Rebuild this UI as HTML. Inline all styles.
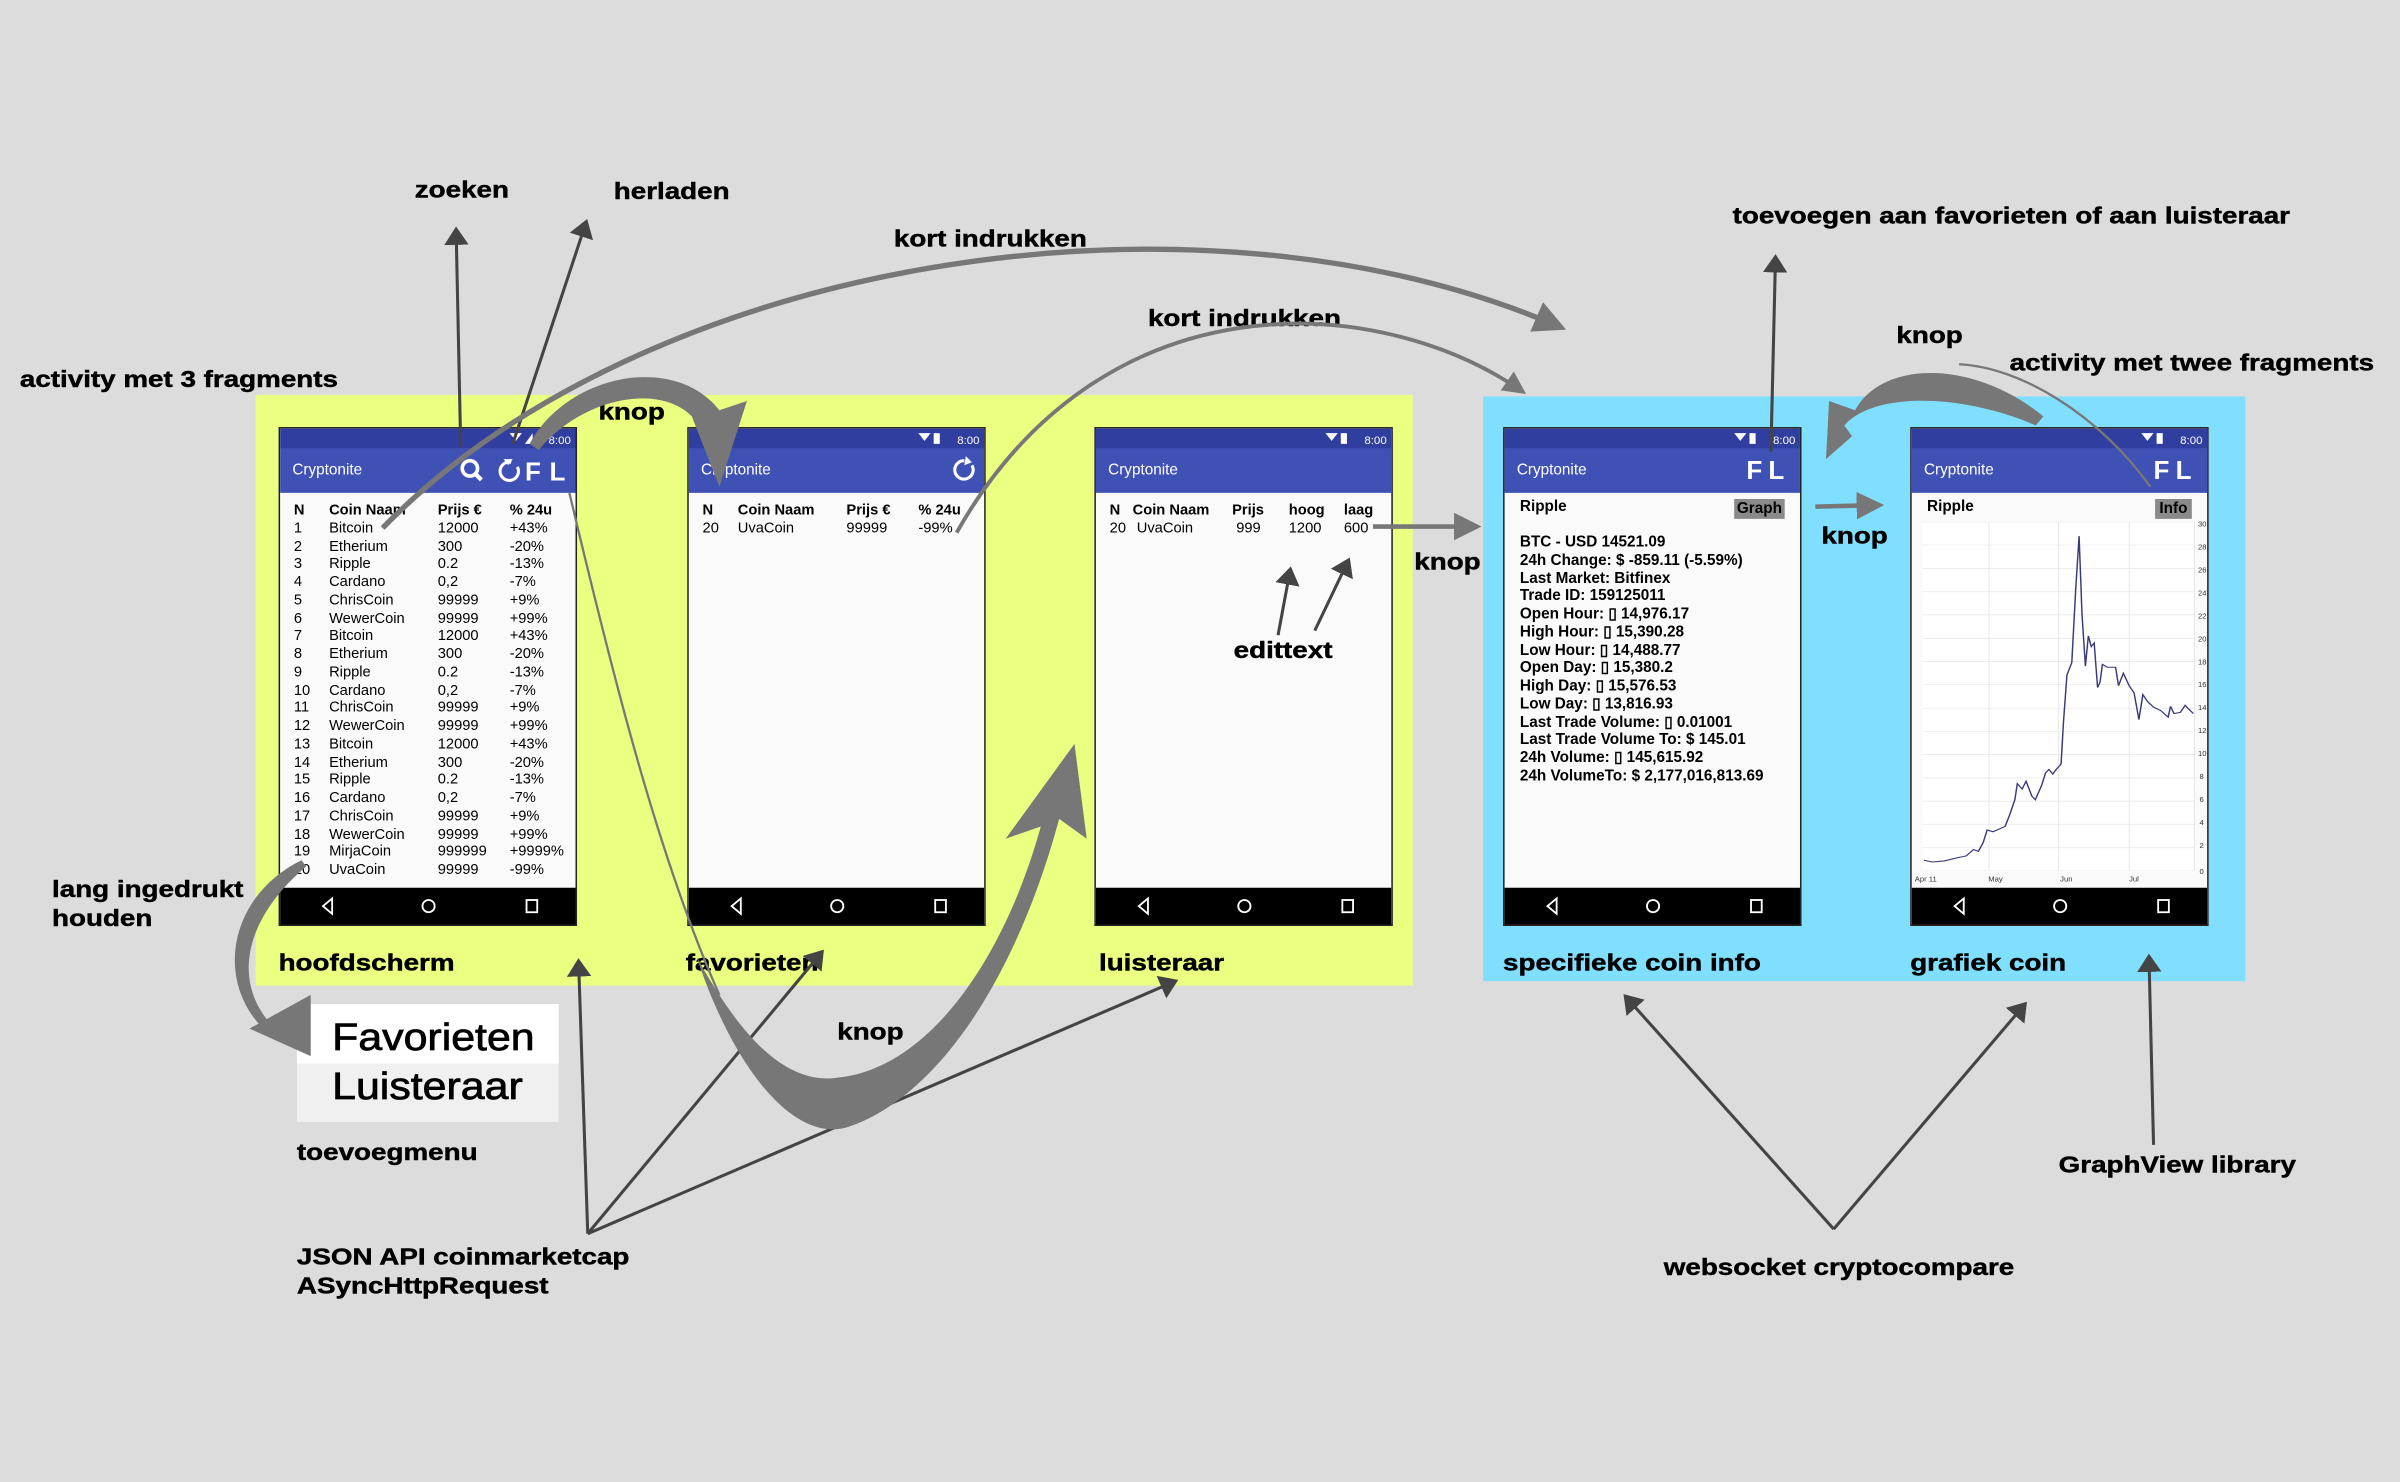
<!DOCTYPE html>
<html><head><meta charset="utf-8"><style>
html,body{margin:0;padding:0;background:#dcdcdc;width:2400px;height:1482px;overflow:hidden}
#w{position:absolute;left:0;top:0;width:1568px;height:968px;transform:scale(1.5306);transform-origin:0 0;font-family:"Liberation Sans",sans-serif}
.a{position:absolute}
.ph{position:absolute;top:279px;width:195px;height:326px;border:1px solid #222;box-sizing:border-box;background:#fafafa;overflow:hidden}
.sb{position:absolute;left:0;top:0;right:0;height:13px;background:#303f9f}
.tb{position:absolute;left:0;top:13px;right:0;height:29px;background:#3f51b5}
.tt{position:absolute;left:8px;top:9px;color:#fff;font-size:10px}
.tm{position:absolute;right:3px;top:3px;color:#fff;font-size:7.5px}
.nv{position:absolute;left:0;right:0;bottom:0;height:24px;background:#000}
.lbl{position:absolute;font-weight:bold;font-size:15px;color:#000;white-space:nowrap;transform:scaleX(1.21);transform-origin:0 0;-webkit-text-stroke:0.3px #000}
.mn{transform:scaleX(1.12);font-weight:normal;font-size:25px;-webkit-text-stroke:0.5px #000}
.t{position:absolute;font-size:9.6px;line-height:11.75px;color:#000;white-space:pre}
.t b{font-weight:bold}
</style></head><body><div id="w">
<div class="a" style="left:167px;top:258px;width:756px;height:386px;background:#ebff80"></div>
<div class="a" style="left:969px;top:259px;width:498px;height:382px;background:#80deff"></div>

<div class="ph" style="left:182px">
<div class="sb"><svg class="a" style="right:26px;top:2px" width="18" height="9"><path d="M1 1h8l-4 5z" fill="#fff"/><path d="M11 8L16 1v7z" fill="#fff"/></svg><span class="tm">8:00</span></div>
<div class="tb"><span class="tt">Cryptonite</span>
<svg class="a" style="left:116px;top:5px" width="80" height="20"><circle cx="8" cy="8" r="5" stroke="#fff" stroke-width="2.4" fill="none"/><path d="M11.5 11.5l4 4" stroke="#fff" stroke-width="2.8"/><path d="M35 4a6 6 0 1 0 4 3" stroke="#fff" stroke-width="2" fill="none"/><path d="M30 2l3 4 3-4z" fill="#fff"/><text x="44" y="16" fill="#fff" font-size="17" font-weight="bold" font-family="Liberation Sans">F</text><text x="60" y="16" fill="#fff" font-size="17" font-weight="bold" font-family="Liberation Sans">L</text></svg></div>
<div class="t" style="left:9px;top:48px"><b>N</b>
1
2
3
4
5
6
7
8
9
10
11
12
13
14
15
16
17
18
19
20</div>
<div class="t" style="left:32px;top:48px"><b>Coin Naam</b>
Bitcoin
Etherium
Ripple
Cardano
ChrisCoin
WewerCoin
Bitcoin
Etherium
Ripple
Cardano
ChrisCoin
WewerCoin
Bitcoin
Etherium
Ripple
Cardano
ChrisCoin
WewerCoin
MirjaCoin
UvaCoin</div>
<div class="t" style="left:103px;top:48px"><b>Prijs €</b>
12000
300
0.2
0,2
99999
99999
12000
300
0.2
0,2
99999
99999
12000
300
0.2
0,2
99999
99999
999999
99999</div>
<div class="t" style="left:150px;top:48px"><b>% 24u</b>
+43%
-20%
-13%
-7%
+9%
+99%
+43%
-20%
-13%
-7%
+9%
+99%
+43%
-20%
-13%
-7%
+9%
+99%
+9999%
-99%</div>
<div class="nv"><svg width="195" height="24"><path d="M34 7l-6 5 6 5z" stroke="#fff" fill="none" stroke-width="1.2"/><circle cx="97" cy="12" r="4" stroke="#fff" fill="none" stroke-width="1.2"/><rect x="161" y="8" width="7" height="8" stroke="#fff" fill="none" stroke-width="1.2"/></svg></div>
</div>

<div class="ph" style="left:449px">
<div class="sb"><svg class="a" style="right:26px;top:2px" width="18" height="9"><path d="M1 1h8l-4 5z" fill="#fff"/><rect x="11" y="1" width="4" height="7" fill="#fff"/></svg><span class="tm">8:00</span></div>
<div class="tb"><span class="tt">Cryptonite</span><svg class="a" style="left:170px;top:5px" width="20" height="18"><path d="M10 3a6 6 0 1 0 5 3" stroke="#fff" stroke-width="2" fill="none"/><path d="M11 0l4 4-5 2z" fill="#fff"/></svg></div>
<div class="t" style="left:9px;top:48px"><b>N</b>
20</div><div class="t" style="left:32px;top:48px"><b>Coin Naam</b>
UvaCoin</div><div class="t" style="left:103px;top:48px"><b>Prijs €</b>
99999</div><div class="t" style="left:150px;top:48px"><b>% 24u</b>
-99%</div>
<div class="nv"><svg width="195" height="24"><path d="M34 7l-6 5 6 5z" stroke="#fff" fill="none" stroke-width="1.2"/><circle cx="97" cy="12" r="4" stroke="#fff" fill="none" stroke-width="1.2"/><rect x="161" y="8" width="7" height="8" stroke="#fff" fill="none" stroke-width="1.2"/></svg></div>
</div>

<div class="ph" style="left:715px">
<div class="sb"><svg class="a" style="right:26px;top:2px" width="18" height="9"><path d="M1 1h8l-4 5z" fill="#fff"/><rect x="11" y="1" width="4" height="7" fill="#fff"/></svg><span class="tm">8:00</span></div>
<div class="tb"><span class="tt">Cryptonite</span></div>
<div class="t" style="left:9px;top:48px"><b>N</b>
20</div><div class="t" style="left:24px;top:48px"><b>Coin Naam</b>
 UvaCoin</div><div class="t" style="left:89px;top:48px"><b>Prijs</b>
 999</div><div class="t" style="left:126px;top:48px"><b>hoog</b>
1200</div><div class="t" style="left:162px;top:48px"><b>laag</b>
600</div>
<div class="nv"><svg width="195" height="24"><path d="M34 7l-6 5 6 5z" stroke="#fff" fill="none" stroke-width="1.2"/><circle cx="97" cy="12" r="4" stroke="#fff" fill="none" stroke-width="1.2"/><rect x="161" y="8" width="7" height="8" stroke="#fff" fill="none" stroke-width="1.2"/></svg></div>
</div>

<div class="ph" style="left:982px">
<div class="sb"><svg class="a" style="right:26px;top:2px" width="18" height="9"><path d="M1 1h8l-4 5z" fill="#fff"/><rect x="11" y="1" width="4" height="7" fill="#fff"/></svg><span class="tm">8:00</span></div>
<div class="tb"><span class="tt">Cryptonite</span><span class="a" style="left:158px;top:5px;color:#fff;font-weight:bold;font-size:17px;letter-spacing:4px">FL</span></div>
<div class="t" style="left:10px;top:46px;font-weight:bold;font-size:10px">Ripple</div>
<div class="a" style="left:150px;top:46px;width:33px;height:13px;background:#8a8a8a;font-size:10px;font-weight:bold;text-align:center;line-height:13px">Graph</div>
<div class="t" style="left:10px;top:69px;font-weight:bold;font-size:10px">BTC - USD 14521.09
24h Change: $ -859.11 (-5.59%)
Last Market: Bitfinex
Trade ID: 159125011
Open Hour: ▯ 14,976.17
High Hour: ▯ 15,390.28
Low Hour: ▯ 14,488.77
Open Day: ▯ 15,380.2
High Day: ▯ 15,576.53
Low Day: ▯ 13,816.93
Last Trade Volume: ▯ 0.01001
Last Trade Volume To: $ 145.01
24h Volume: ▯ 145,615.92
24h VolumeTo: $ 2,177,016,813.69</div>
<div class="nv"><svg width="195" height="24"><path d="M34 7l-6 5 6 5z" stroke="#fff" fill="none" stroke-width="1.2"/><circle cx="97" cy="12" r="4" stroke="#fff" fill="none" stroke-width="1.2"/><rect x="161" y="8" width="7" height="8" stroke="#fff" fill="none" stroke-width="1.2"/></svg></div>
</div>

<div class="ph" style="left:1248px">
<div class="sb"><svg class="a" style="right:26px;top:2px" width="18" height="9"><path d="M1 1h8l-4 5z" fill="#fff"/><rect x="11" y="1" width="4" height="7" fill="#fff"/></svg><span class="tm">8:00</span></div>
<div class="tb"><span class="tt">Cryptonite</span><span class="a" style="left:158px;top:5px;color:#fff;font-weight:bold;font-size:17px;letter-spacing:4px">FL</span></div>
<div class="t" style="left:10px;top:46px;font-weight:bold;font-size:10px">Ripple</div>
<div class="a" style="left:159px;top:46px;width:24px;height:13px;background:#8a8a8a;font-size:10px;font-weight:bold;text-align:center;line-height:13px">Info</div>
<div class="nv"><svg width="195" height="24"><path d="M34 7l-6 5 6 5z" stroke="#fff" fill="none" stroke-width="1.2"/><circle cx="97" cy="12" r="4" stroke="#fff" fill="none" stroke-width="1.2"/><rect x="161" y="8" width="7" height="8" stroke="#fff" fill="none" stroke-width="1.2"/></svg></div>
</div>
<div class="a" style="left:1256px;top:341px;width:178px;height:228px;background:#fff"></div>
<svg class="a" style="left:1256px;top:341px" width="178" height="228" viewBox="915 340 560 980" preserveAspectRatio="none">
<g stroke="#e6e6e6" stroke-width="2">
<path d="M915 340H1475M915 405H1475M915 471H1475M915 536H1475M915 601H1475M915 667H1475M915 732H1475M915 797H1475M915 863H1475M915 928H1475M915 993H1475M915 1059H1475M915 1124H1475M915 1189H1475M915 1255H1475M915 1320H1475M1052 340V1320M1195 340V1320M1340 340V1320"/></g>
<path d="M1475 340V1320" stroke="#ccc" stroke-width="2"/>
<polyline fill="none" stroke="#3a3a7a" stroke-width="3" points="918,1290 935,1295 960,1292 990,1282 1005,1278 1020,1260 1030,1265 1040,1240 1048,1205 1060,1210 1085,1195 1095,1160 1105,1120 1110,1075 1120,1090 1128,1068 1140,1110 1147,1120 1160,1080 1168,1045 1175,1035 1183,1048 1190,1035 1200,1020 1205,900 1212,770 1222,735 1230,530 1237,380 1243,600 1250,745 1256,660 1262,690 1268,680 1275,805 1280,790 1285,740 1295,748 1312,748 1318,800 1328,765 1340,800 1350,820 1360,895 1368,825 1378,845 1390,860 1405,870 1420,888 1425,858 1432,878 1445,875 1455,855 1462,865 1472,878"/>
</svg>
<svg class="a" style="left:1248px;top:335px" width="200" height="250" font-family="Liberation Sans" font-size="5" fill="#333">
<text x="188" y="9">30</text><text x="188" y="24">28</text><text x="188" y="39">26</text><text x="188" y="54">24</text><text x="188" y="69">22</text><text x="188" y="84">20</text><text x="188" y="99">18</text><text x="188" y="114">16</text><text x="188" y="129">14</text><text x="188" y="144">12</text><text x="188" y="159">10</text><text x="189" y="174">8</text><text x="189" y="189">6</text><text x="189" y="204">4</text><text x="189" y="219">2</text><text x="189" y="236">0</text>
<text x="3" y="241">Apr 11</text><text x="51" y="241">May</text><text x="98" y="241">Jun</text><text x="143" y="241">Jul</text></svg>

<div class="a" style="left:194px;top:656px;width:171px;height:39px;background:#fff"></div>
<div class="a" style="left:194px;top:695px;width:171px;height:38px;background:#f0f0f0"></div>
<div class="lbl mn" style="left:217px;top:664px">Favorieten</div>
<div class="lbl mn" style="left:217px;top:696px">Luisteraar</div>

<div class="lbl" style="left:271px;top:116px">zoeken</div>
<div class="lbl" style="left:401px;top:117px">herladen</div>
<div class="lbl" style="left:584px;top:148px">kort indrukken</div>
<div class="lbl" style="left:750px;top:200px">kort indrukken</div>
<div class="lbl" style="left:1132px;top:133px">toevoegen aan favorieten of aan luisteraar</div>
<div class="lbl" style="left:1239px;top:211px">knop</div>
<div class="lbl" style="left:1313px;top:229px">activity met twee fragments</div>
<div class="lbl" style="left:13px;top:240px">activity met 3 fragments</div>
<div class="lbl" style="left:391px;top:261px">knop</div>
<div class="lbl" style="left:924px;top:359px">knop</div>
<div class="lbl" style="left:1190px;top:342px">knop</div>
<div class="lbl" style="left:806px;top:417px">edittext</div>
<div class="lbl" style="left:34px;top:573px">lang ingedrukt</div>
<div class="lbl" style="left:34px;top:592px">houden</div>
<div class="lbl" style="left:182px;top:621px">hoofdscherm</div>
<div class="lbl" style="left:448px;top:621px">favorieten</div>
<div class="lbl" style="left:718px;top:621px">luisteraar</div>
<div class="lbl" style="left:982px;top:621px">specifieke coin info</div>
<div class="lbl" style="left:1248px;top:621px">grafiek coin</div>
<div class="lbl" style="left:547px;top:666px">knop</div>
<div class="lbl" style="left:194px;top:745px">toevoegmenu</div>
<div class="lbl" style="left:194px;top:813px">JSON API coinmarketcap</div>
<div class="lbl" style="left:194px;top:832px">ASyncHttpRequest</div>
<div class="lbl" style="left:1087px;top:820px">websocket cryptocompare</div>
<div class="lbl" style="left:1345px;top:753px">GraphView library</div>

<svg class="a" style="left:0;top:0" width="1568" height="968">
<defs><marker id="ah" markerWidth="6" markerHeight="8" refX="5" refY="4" orient="auto" markerUnits="strokeWidth"><path d="M0 0L6 4L0 8z" fill="#444"/></marker>
<marker id="ag" markerWidth="6" markerHeight="6" refX="5" refY="3" orient="auto" markerUnits="strokeWidth"><path d="M0 0L6 3L0 6z" fill="#777"/></marker></defs>
<g stroke="#444" stroke-width="2" fill="none" marker-end="url(#ah)">
<path d="M301 292L298 150"/><path d="M335 290L383 145"/>
<path d="M384 806L378 628"/><path d="M384 806L537 622"/><path d="M384 806L768 641"/>
<path d="M835 415L843 372"/><path d="M859 412L881 366"/>
<path d="M1157 295L1160 168"/><path d="M1198 803L1062 651"/><path d="M1198 803L1323 656"/><path d="M1407 748L1404 625"/>
</g>
<g stroke="#777" fill="none">
<path d="M897 344L965 344" stroke-width="3" marker-end="url(#ag)"/>
<path d="M1186 331L1228 330" stroke-width="3" marker-end="url(#ag)"/>
<path d="M250 345C420 170 780 110 1020 214" stroke-width="3.5" marker-end="url(#ag)"/>
<path d="M625 348C720 180 900 190 995 256" stroke-width="2.5" marker-end="url(#ag)"/>
<path d="M372 322C400 440 430 560 470 650" stroke-width="1.5"/>
<path d="M1405 318C1370 270 1320 240 1280 238" stroke-width="1.5"/>
</g>
<g fill="#777">
<path d="M346 290C370 245 440 230 470 268L488 262L470 318L452 272C430 250 380 260 352 294z"/>
<path d="M455 625C480 700 520 748 555 736C615 715 665 635 692 535L710 548L702 486L657 548L680 540C655 630 605 698 548 704C510 710 480 670 455 625z"/>
<path d="M197 562C150 585 140 640 172 672L176 668C152 640 160 600 200 566z"/>
<path d="M163 672L203 650L203 690z"/>
<path d="M1335 272C1290 235 1230 235 1212 268L1195 262L1193 300L1210 285L1205 278C1225 255 1285 258 1330 278z"/>
</g>
</svg>
</div></body></html>
